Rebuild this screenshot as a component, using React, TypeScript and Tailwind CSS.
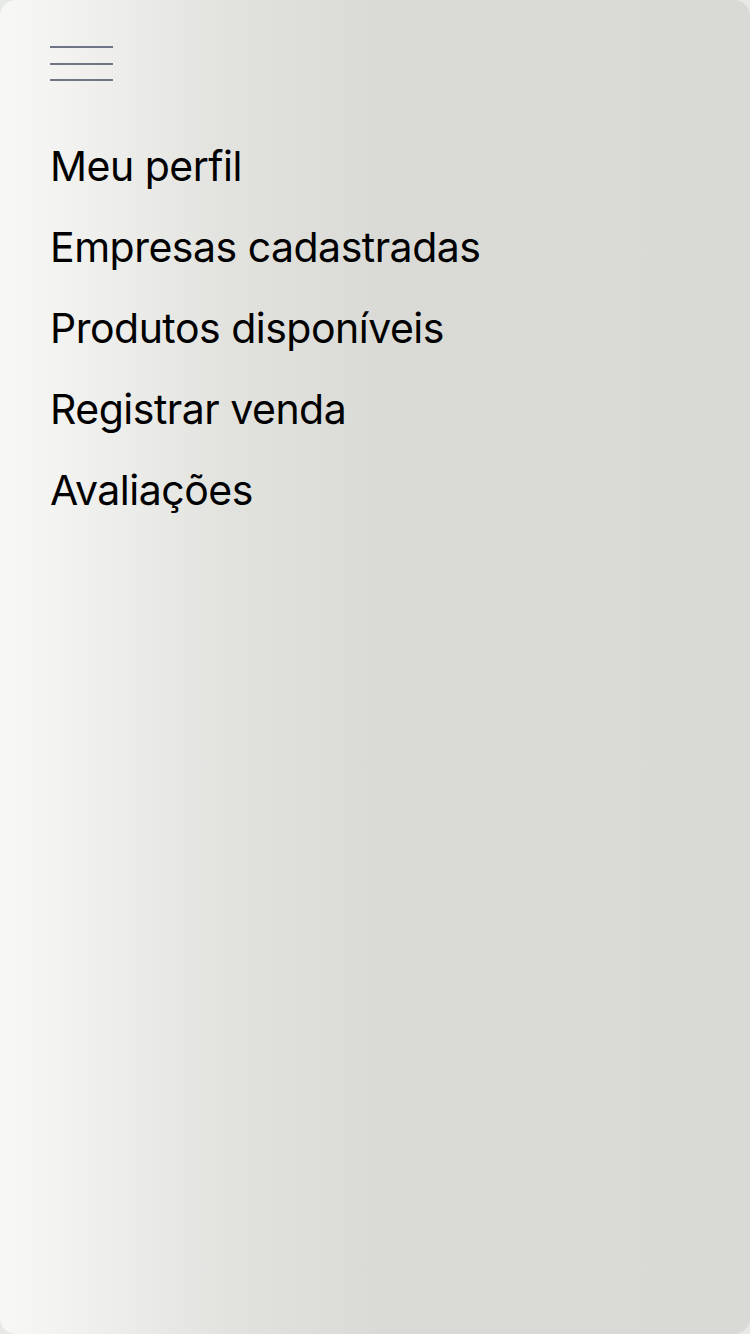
import React from "react";

export default function App() {
  const items = [
    "Meu perfil",
    "Empresas cadastradas",
    "Produtos disponíveis",
    "Registrar venda",
    "Avaliações",
  ];
  return (
    <div className="w-[750px] h-[1334px] bg-[#e7e9e4]">
      <div className="w-full h-full rounded-[16px] bg-[linear-gradient(90deg,#f7f7f5_0%,#f4f4f2_6%,#e2e3df_30%,#dadbd6_50%,#d9dad5_100%)] px-[50px] pt-[46px]">
        <button className="flex flex-col gap-[14.5px] w-[63px]" aria-label="menu">
          <span className="block h-[2px] w-full bg-[#6f7587]" />
          <span className="block h-[2px] w-full bg-[#6f7587]" />
          <span className="block h-[2px] w-full bg-[#6f7587]" />
        </button>
        <nav className="mt-[60px] flex flex-col gap-[31px]">
          {items.map((t) => (
            <div
              key={t}
              className="text-[41px] leading-[50px] tracking-[-0.5px] text-black"
              style={{ fontFamily: "Inter, 'Noto Sans', sans-serif" }}
            >
              {t}
            </div>
          ))}
        </nav>
      </div>
    </div>
  );
}
